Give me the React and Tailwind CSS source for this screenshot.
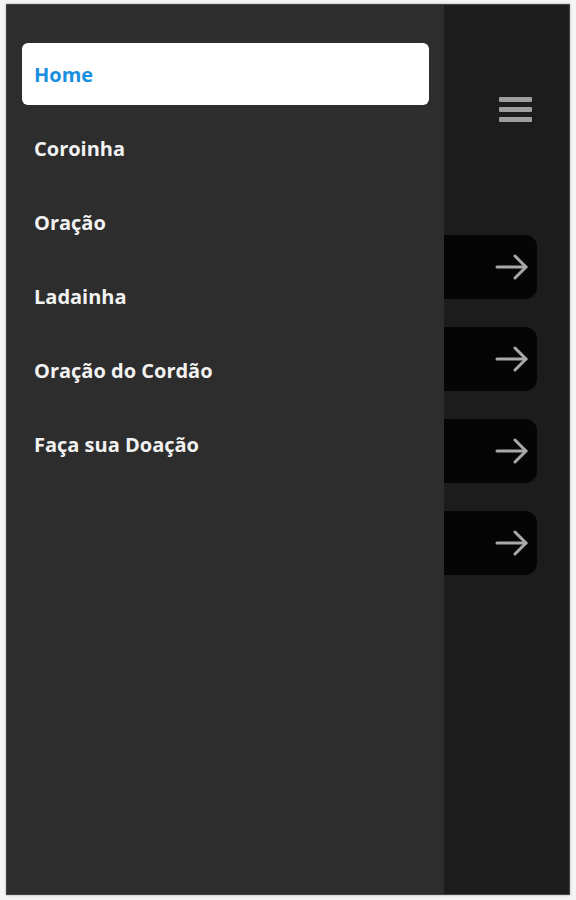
import { useState } from "react";

const menu = ["Home", "Coroinha", "Oração", "Ladainha", "Oração do Cordão", "Faça sua Doação"];

const Arrow = () => (
  <svg width="34" height="26" viewBox="0 0 34 26" fill="none" stroke="#a9a9a9" strokeWidth="3" strokeLinecap="round" strokeLinejoin="round">
    <path d="M2 13h29" />
    <path d="M20 2l11 11-11 11" />
  </svg>
);

const App = () => {
  const [active] = useState("Home");

  return (
    <div className="h-[900px] bg-[#f4f4f4] pt-[4px] pb-[5px] pl-[6px] pr-[6px]" style={{ fontFamily: '"Open Sans", "Noto Sans", sans-serif' }}>
      <div className="relative h-full bg-[#1c1c1c] border border-[#444] shadow-[0_0_2px_rgba(0,0,0,0.35)] overflow-hidden">
        {/* content behind drawer */}
        <div className="flex flex-col">
          <div className="flex justify-end pt-[92px] pr-[37px]">
            <div className="flex flex-col gap-[5px]">
              <div className="h-[5px] w-[33px] rounded-[1px] bg-[#9e9e9e]"></div>
              <div className="h-[5px] w-[33px] rounded-[1px] bg-[#9e9e9e]"></div>
              <div className="h-[5px] w-[33px] rounded-[1px] bg-[#9e9e9e]"></div>
            </div>
          </div>
          <div className="flex flex-col gap-[28px] pt-[113px] pl-[16px] pr-[32px]">
            {[0, 1, 2, 3].map((i) => (
              <div key={i} className="h-[64px] rounded-[12px] bg-[#050505] flex items-center justify-end pr-[8px]">
                <Arrow />
              </div>
            ))}
          </div>
        </div>

        {/* drawer */}
        <div className="absolute left-0 top-0 h-full w-[437px] bg-[#2d2d2d] pt-[38px] px-[15px]">
          <div className="flex flex-col gap-[12px]">
            {menu.map((item) => (
              <div
                key={item}
                className={
                  item === active
                    ? "h-[62px] rounded-[6px] bg-white flex items-center px-[12px] pt-[2px] text-[20px] font-bold text-[#1a8fdf]"
                    : "h-[62px] flex items-center px-[12px] pt-[2px] text-[20px] font-bold text-[#f2f2f2]"
                }
              >
                {item}
              </div>
            ))}
          </div>
        </div>
      </div>
    </div>
  );
};

export default App;
